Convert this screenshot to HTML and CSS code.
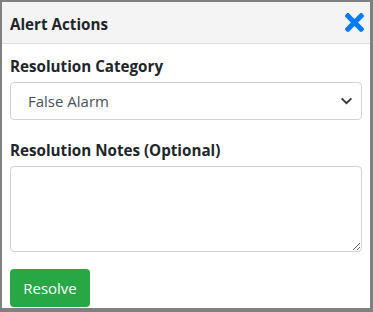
FILE: index.html
```html
<!DOCTYPE html>
<html>
<head>
<meta charset="utf-8">
<link rel="stylesheet" href="styles.css">
</head>
<body>
<div class="frame">
  <div class="panel">
    <div class="header">
      <span class="title">Alert Actions</span>
      <svg class="close" viewBox="0 80 352 352" width="19" height="19" aria-hidden="true"><path fill="#007bff" d="M242.72 256l100.07-100.07c12.28-12.28 12.28-32.19 0-44.48l-22.24-22.24c-12.28-12.28-32.19-12.28-44.48 0L176 189.28 75.930 89.21c-12.28-12.28-32.190-12.280-44.48 0L9.21 111.45c-12.28 12.28-12.28 32.190 0 44.480L109.28 256 9.21 356.07c-12.28 12.28-12.28 32.19 0 44.48l22.24 22.24c12.28 12.28 32.2 12.28 44.48 0L176 322.72l100.07 100.07c12.28 12.28 32.2 12.28 44.48 0l22.24-22.24c12.28-12.28 12.28-32.19 0-44.48L242.72 256z"/></svg>
    </div>
    <div class="body">
      <div class="group">
        <label class="label">Resolution Category</label>
        <div class="select">
          <span>False Alarm</span>
          <svg class="chev" viewBox="0 0 14 9" width="13" height="8" aria-hidden="true"><path d="M1.5 1.5 L7 7 L12.5 1.5" fill="none" stroke="#343a40" stroke-width="2.2"/></svg>
        </div>
      </div>
      <div class="group">
        <label class="label">Resolution Notes (Optional)</label>
        <textarea class="notes"></textarea>
      </div>
      <button class="btn">Resolve</button>
    </div>
  </div>
</div>
</body>
</html>
```

FILE: styles.css
```css
html, body {
  margin: 0;
  padding: 0;
}
body {
  background: #808080;
  width: 373px;
  height: 312px;
  overflow: hidden;
  font-family: "Open Sans", "Noto Sans", sans-serif;
  color: #212529;
}
.frame {
  padding: 2px 3px 0 2px;
}
.panel {
  background: #fff;
  height: 306px;
  overflow: hidden;
}
.header {
  display: flex;
  align-items: center;
  justify-content: space-between;
  background: #f4f4f4;
  border-bottom: 1px solid #dcdcdc;
  height: 41px;
  padding: 0 6px 0 8px;
}
.title {
  font-weight: 700;
  font-size: 15.2px;
  padding-top: 2px;
}
.close {
  display: block;
}
.body {
  padding: 10px 8px 0 8px;
}
.group {
  margin-bottom: 18px;
}
.label {
  display: block;
  font-weight: 700;
  font-size: 15.2px;
  line-height: 24px;
  margin-bottom: 4px;
}
.select {
  box-sizing: border-box;
  height: 38px;
  border: 1px solid #ced4da;
  border-radius: 4px;
  display: flex;
  align-items: center;
  justify-content: space-between;
  padding: 0 8px 0 17px;
  font-size: 15px;
  color: #495057;
}
.chev {
  display: block;
}
.notes {
  display: block;
  box-sizing: border-box;
  width: 100%;
  height: 86px;
  border: 1px solid #ced4da;
  border-radius: 4px;
  margin: 1px 0 0 0;
  font-family: inherit;
}
.btn {
  display: block;
  box-sizing: border-box;
  width: 80px;
  height: 38px;
  border: none;
  border-radius: 4px;
  background: #28a745;
  color: #fff;
  font-family: inherit;
  font-size: 15px;
  margin-top: -1px;
}
```
